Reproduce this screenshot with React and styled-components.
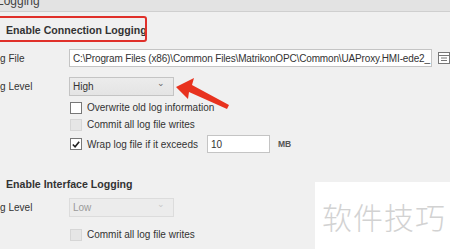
import React from 'react';
import styled, { createGlobalStyle } from 'styled-components';

const Global = createGlobalStyle`
  html, body { margin: 0; padding: 0; background: #f0f0f0; }
  body { width: 450px; height: 249px; overflow: hidden; font-family: "Liberation Sans", Arial, sans-serif; }
`;

function CheckIcon(){
  return (
    <svg width="11" height="11" viewBox="0 0 11 11">
      <path d="M2 5.5 L4.5 8 L9 2.5" fill="none" stroke="#222" strokeWidth="1.8" />
    </svg>
  );
}

function BrowseIcon(){
  return (
    <svg width="12" height="12" viewBox="0 0 12 12">
      <rect x="0.5" y="0.5" width="11" height="11" fill="#fff" stroke="#777" />
      <path d="M0.5 3.5 H11.5 M3 6 H9 M3 8.5 H9" stroke="#777" />
    </svg>
  );
}

function Checkbox({ checked, disabled, label }){
  return (
    <CheckRow>
      <Box disabled={disabled}>{checked && <CheckIcon />}</Box>
      <CheckLabel>{label}</CheckLabel>
    </CheckRow>
  );
}

function App(){
  return (
    <Page>
      <Global />
      <Header><HeaderText>Logging</HeaderText></Header>
      <Panel>
        <Section>
          <Title>
            <TitleBox />
            Enable Connection Logging
          </Title>
          <FieldRow>
            <Label>Log File</Label>
            <PathInput>C:\Program Files (x86)\Common Files\MatrikonOPC\Common\UAProxy.HMI-ede2_</PathInput>
            <Browse><BrowseIcon /></Browse>
          </FieldRow>
          <FieldRow top={10}>
            <Label>Log Level</Label>
            <Select>High<Chevron>&#8964;</Chevron></Select>
          </FieldRow>
          <Options>
            <Checkbox label="Overwrite old log information" />
            <Checkbox disabled label="Commit all log file writes" />
            <WrapRow>
              <Checkbox checked label="Wrap log file if it exceeds" />
              <SizeInput>10</SizeInput>
              <Unit>MB</Unit>
            </WrapRow>
          </Options>
        </Section>
        <Section second>
          <Title>
            <TitleBox />
            Enable Interface Logging
          </Title>
          <FieldRow top={7}>
            <Label>Log Level</Label>
            <Select disabled>Low<Chevron disabled>&#8964;</Chevron></Select>
          </FieldRow>
          <Options top={11}>
            <Checkbox disabled label="Commit all log file writes" />
          </Options>
        </Section>
      </Panel>
      <Highlight />
      <Arrow width="450" height="249" viewBox="0 0 450 249">
        <polygon points="176,87 194,78 192,85 229,105 227,109 189,92 188,99" fill="#e8321e" />
      </Arrow>
      <Watermark>软件技巧</Watermark>
    </Page>
  );
}

const Page = styled.div`
  position: relative;
  width: 450px;
  height: 249px;
  overflow: hidden;
  background: #f0f0f0;
  color: #333;
  font-size: 10px;
`;
const Header = styled.div`
  height: 11px;
  background: #e3e3e3;
  border-bottom: 1px solid #cfcfcf;
  overflow: hidden;
`;
const HeaderText = styled.div`
  margin: -7px 0 0 -3px;
  font-size: 12px;
  line-height: 16px;
  color: #444;
`;
const Panel = styled.div`
  margin-left: -11px;
`;
const Section = styled.div`
  padding-top: ${p => (p.second ? '24px' : '11px')};
`;
const Title = styled.div`
  display: flex;
  align-items: center;
  gap: 6px;
  height: 14px;
  font-weight: bold;
  font-size: 10.6px;
  color: #333;
`;
const TitleBox = styled.span`
  width: 11px;
  height: 11px;
  border: 1px solid #888;
  background: #fff;
  box-sizing: border-box;
`;
const FieldRow = styled.div`
  display: flex;
  align-items: center;
  margin-top: ${p => (p.top ? p.top : 12)}px;
`;
const Label = styled.div`
  width: 80px;
  flex: none;
  color: #333;
`;
const PathInput = styled.div`
  width: 367px;
  height: 18px;
  box-sizing: border-box;
  padding: 0 0 0 3px;
  line-height: 17px;
  background: #fff;
  border: 1px solid #c4c4c4;
  white-space: nowrap;
  overflow: hidden;
  letter-spacing: -0.15px;
  color: #333;
`;
const Browse = styled.div`
  margin-left: 6px;
  display: flex;
`;
const Select = styled.div`
  position: relative;
  width: 105px;
  height: 19px;
  box-sizing: border-box;
  padding-left: 3px;
  line-height: 18px;
  border: 1px solid ${p => (p.disabled ? '#dcdcdc' : '#c4c4c4')};
  background: ${p => (p.disabled ? '#ececec' : 'linear-gradient(#ececec, #e4e4e4)')};
  color: ${p => (p.disabled ? '#9a9a9a' : '#333')};
`;
const Chevron = styled.span`
  position: absolute;
  right: 8px;
  top: -4px;
  font-size: 9px;
  color: ${p => (p.disabled ? '#c8c8c8' : '#666')};
`;
const Options = styled.div`
  display: flex;
  flex-direction: column;
  gap: 4px;
  margin: ${p => (p.top ? p.top : 5)}px 0 0 81px;
`;
const CheckRow = styled.div`
  display: flex;
  align-items: center;
  gap: 5px;
  height: 13px;
`;
const Box = styled.span`
  width: 12px;
  height: 12px;
  box-sizing: border-box;
  display: flex;
  align-items: center;
  justify-content: center;
  border: 1px solid ${p => (p.disabled ? '#d6d6d6' : '#777')};
  background: ${p => (p.disabled ? '#e6e6e6' : '#fff')};
`;
const CheckLabel = styled.span`
  color: #333;
`;
const WrapRow = styled.div`
  display: flex;
  align-items: center;
`;
const SizeInput = styled.div`
  margin-left: 9px;
  width: 63px;
  height: 18px;
  box-sizing: border-box;
  padding-left: 3px;
  line-height: 17px;
  background: #fff;
  border: 1px solid #c4c4c4;
`;
const Unit = styled.span`
  margin-left: 8px;
  font-size: 8.5px;
  font-weight: bold;
  color: #555;
`;
const Highlight = styled.div`
  position: absolute;
  left: -10px;
  top: 16px;
  width: 153px;
  height: 22px;
  border: 2px solid #e0302a;
  border-radius: 3px;
`;
const Arrow = styled.svg`
  position: absolute;
  left: 0;
  top: 0;
  pointer-events: none;
`;
const Watermark = styled.div`
  position: absolute;
  left: 315px;
  top: 182px;
  width: 135px;
  height: 67px;
  background: #fff;
  display: flex;
  align-items: center;
  padding-left: 7px;
  box-sizing: border-box;
  font-family: "Noto Sans CJK SC", sans-serif;
  font-weight: 300;
  font-size: 30px;
  color: #d2d2d2;
  letter-spacing: 1px;
`;

export default App;
